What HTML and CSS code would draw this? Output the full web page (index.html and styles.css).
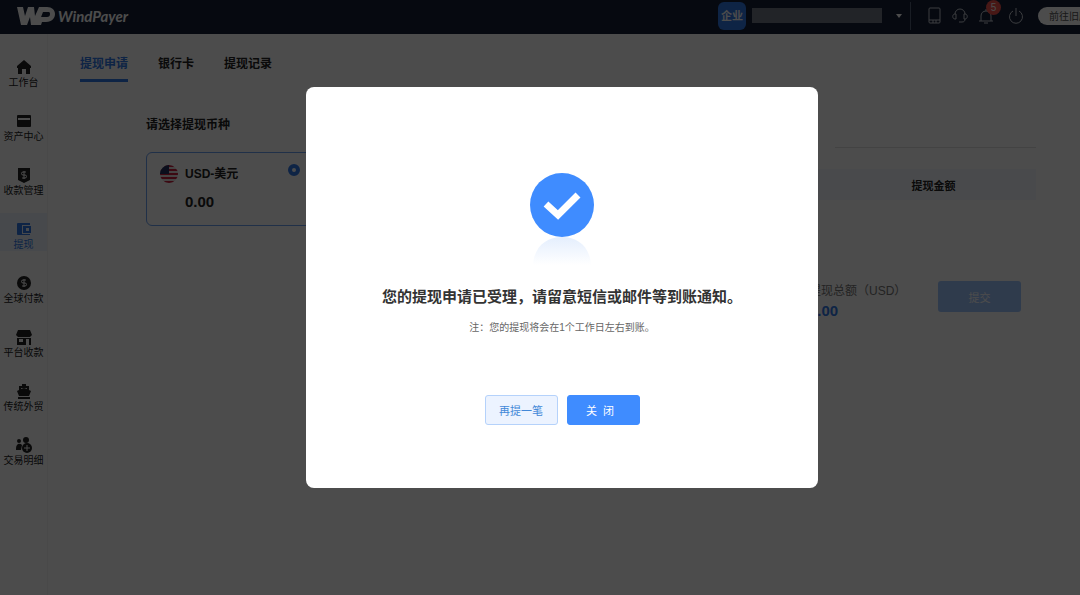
FILE: index.html
```html
<!DOCTYPE html>
<html lang="zh-CN">
<head>
  <meta charset="UTF-8">
  <meta name="viewport" content="width=device-width, initial-scale=1.0">
  <title>WindPayer</title>
  <link rel="stylesheet" href="styles.css">
</head>
<body>
  <div class="page">
    <header class="header">
      <a class="logo" href="#">
        <svg width="38" height="18" viewBox="0 0 38 18" aria-hidden="true">
          <path d="M0 0h6l2 9 3-9h6l1 9 4-9h8c5 0 8 3 8 7s-3 8-9 8h-4l-1 3h-5l3-8h8c2 0 3-1 3-3s-1-2-2-2h-5l-5 13h-7l-1-8-3 8H4z" fill="currentColor"/>
        </svg>
        <span class="logo-text">WindPayer</span>
      </a>
      <div class="account">
        <span class="account-type">企业</span>
        <span class="account-name"></span>
        <button class="account-toggle" aria-label="切换账户"><span class="caret"></span></button>
      </div>
      <nav class="tools">
        <a href="#" aria-label="手机端">
          <svg width="16" height="18" viewBox="0 0 16 18"><rect x="3" y="1" width="11" height="15" rx="1"/><path d="M3 13h11M7 13v3M10 13v3"/></svg>
        </a>
        <a href="#" aria-label="客服">
          <svg width="16" height="18" viewBox="0 0 16 18"><path d="M3 7a5 5 0 0 1 10 0M4 7v5H3C0 12 0 7 3 7zM12 7v5h1c3 0 3-5 0-5zM13 12c0 2-1 3-3 3M7 15h3"/></svg>
        </a>
        <a class="bell" href="#" aria-label="消息">
          <svg width="16" height="18" viewBox="0 0 16 18"><path d="M1 14h14M3 14V9c0-3 2-5 5-5s5 2 5 5v5M8 4V2M6 16h4"/></svg>
          <span class="badge">5</span>
        </a>
        <a href="#" aria-label="退出">
          <svg width="16" height="18" viewBox="0 0 16 18"><path d="M5 4a6.500 6.500 0 1 0 6 0M8 1v8"/></svg>
        </a>
        <button class="old-version">前往旧版</button>
      </nav>
    </header>

    <div class="layout">
      <nav class="sidebar">
        <a class="menu-item" href="#">
          <svg width="16" height="16" viewBox="0 0 16 16"><path d="M8 1 1 7v2h1v6h4v-5h4v5h4V9h1V7z"/></svg>
          工作台
        </a>
        <a class="menu-item" href="#">
          <svg width="16" height="16" viewBox="0 0 16 16"><path fill-rule="evenodd" d="M2 2h12a1 1 0 0 1 1 1v10a1 1 0 0 1-1 1H2a1 1 0 0 1-1-1V3a1 1 0 0 1 1-1zM2 5v2h12V5z"/></svg>
          资产中心
        </a>
        <a class="menu-item" href="#">
          <svg width="16" height="16" viewBox="0 0 16 16"><path d="M2 1h12v12l-6 3-6-3z"/><path class="mark" d="M10 5H7a1.500 1.500 0 0 0 0 3h2a1.500 1.500 0 0 1 0 3H6M8 4v8"/></svg>
          收款管理
        </a>
        <a class="menu-item active" href="#">
          <svg width="16" height="16" viewBox="0 0 16 16"><path d="M2 2h12v2H6v9h8v1H2a1 1 0 0 1-1-1V3a1 1 0 0 1 1-1z"/><path fill-rule="evenodd" d="M7 5h8v7H7zM10 7v3h3V7z"/></svg>
          提现
        </a>
        <a class="menu-item" href="#">
          <svg width="16" height="16" viewBox="0 0 16 16"><circle cx="8" cy="8" r="7"/><path class="mark" d="M10 5H7a1.500 1.500 0 0 0 0 3h2a1.500 1.500 0 0 1 0 3H6M8 4v8"/></svg>
          全球付款
        </a>
        <a class="menu-item" href="#">
          <svg width="16" height="16" viewBox="0 0 16 16"><path d="M2 1h12l2 5-2 2H2L0 6z"/><path fill-rule="evenodd" d="M1 9h14v7H1zM3 10v3h4v-3zM10 10v6h3v-6z"/></svg>
          平台收款
        </a>
        <a class="menu-item" href="#">
          <svg width="16" height="16" viewBox="0 0 16 16"><path fill-rule="evenodd" d="M6 1h4v2h3v4l2 1-2 5H3L1 8l2-1V3h3zM5 5v1l3-1 3 1V5z"/><path d="M2 14h12v2H2z"/></svg>
          传统外贸
        </a>
        <a class="menu-item" href="#">
          <svg width="16" height="16" viewBox="0 0 16 16"><circle cx="3" cy="4" r="2"/><circle cx="10" cy="3" r="3"/><path d="M0 12c0-6 4-6 6-4l-1 5H0z"/><circle cx="11" cy="11" r="5"/><path class="mark" d="M11 8v6M8 11h6"/></svg>
          交易明细
        </a>
      </nav>

      <main class="main">
        <nav class="tabs">
          <a class="tab current" href="#">提现申请</a>
          <a class="tab" href="#">银行卡</a>
          <a class="tab" href="#">提现记录</a>
        </nav>
        <div class="columns">
          <section class="currency">
            <h2 class="section-title">请选择提现币种</h2>
            <label class="currency-card">
              <svg class="flag" width="20" height="20" viewBox="0 0 20 20" aria-hidden="true">
                <defs><clipPath id="round"><circle cx="10" cy="10" r="9"/></clipPath></defs>
                <g clip-path="url(#round)">
                  <path fill="#e8dfe2" d="M0 0h20v20H0z"/>
                  <path stroke="#c8203f" stroke-width="2" d="M0 2h20M0 6h20M0 10h20M0 14h20M0 18h20"/>
                  <path fill="#25305f" d="M0 0h10v10H0z"/>
                </g>
              </svg>
              <span class="currency-info">
                <span class="currency-name">USD-美元</span>
                <span class="currency-amount">0.00</span>
              </span>
              <input class="currency-radio" type="radio" name="currency" checked>
            </label>
          </section>
          <section class="detail">
            <div class="divider"></div>
            <table class="detail-table">
              <thead>
                <tr><th></th><th>提现金额</th></tr>
              </thead>
            </table>
            <div class="summary">
              <div class="total">
                <div class="total-label">提现总额（USD）</div>
                <div class="total-amount">0.00</div>
              </div>
              <button class="submit-button">提交</button>
            </div>
          </section>
        </div>
      </main>
    </div>

    <div class="overlay">
      <div class="dialog" role="dialog" aria-modal="true" aria-labelledby="dialogTitle">
        <svg class="success" width="80" height="100" viewBox="0 0 80 100" aria-hidden="true">
          <defs>
            <linearGradient id="fade" x1="0" y1="0" x2="0" y2="1">
              <stop offset="0" stop-color="#e4eefd"/>
              <stop offset="1" stop-color="#fff"/>
            </linearGradient>
          </defs>
          <path d="M11 96C12 78 24 68 40 68s28 10 29 28z" fill="url(#fade)"/>
          <circle cx="40" cy="36" r="32" fill="#3f8cff"/>
          <path d="M24 35l12 11 20-20" fill="none" stroke="#fff" stroke-width="7"/>
        </svg>
        <h1 class="dialog-title" id="dialogTitle">您的提现申请已受理，请留意短信或邮件等到账通知。</h1>
        <p class="dialog-note">注：您的提现将会在1个工作日左右到账。</p>
        <div class="dialog-actions">
          <button class="btn">再提一笔</button>
          <button class="btn primary">关&nbsp; 闭</button>
        </div>
      </div>
    </div>
  </div>
</body>
</html>
```
FILE: styles.css
```css
* {
  box-sizing: border-box;
}

body {
  margin: 0;
  font-family: "Liberation Sans", "Noto Sans CJK SC", sans-serif;
  font-size: 12px;
  color: #222;
  background-color: #fff;
  overflow: hidden;
}

a {
  color: inherit;
  text-decoration: none;
}

button {
  font-family: inherit;
  cursor: pointer;
}

.page {
  position: relative;
  display: flex;
  flex-direction: column;
  min-width: 1124px;
  min-height: 100vh;
}

/* header */
.header {
  display: flex;
  align-items: center;
  height: 34px;
  padding: 0 24px 3px 17px;
  background-color: #142038;
  color: #fff;
}

.logo {
  display: flex;
  align-items: center;
  gap: 3px;
  margin-right: auto;
}

.logo-text {
  font-family: Lato, sans-serif;
  font-size: 15px;
  font-weight: bold;
  font-style: italic;
}

.account {
  display: flex;
  align-items: center;
  height: 28px;
  border-right: 1px solid #56617a;
}

.account-type {
  width: 28px;
  margin-right: 6px;
  border-radius: 6px;
  background-color: #3078e8;
  font-size: 11px;
  font-weight: bold;
  line-height: 28px;
  text-align: center;
}

.account-name {
  width: 130px;
  height: 15px;
  background-color: #747a86;
}

.account-toggle {
  display: flex;
  padding: 12px 8px 12px 14px;
  border: 0;
  background: none;
}

.caret {
  border: 3px solid transparent;
  border-top: 4px solid #fff;
  border-bottom: 0;
}

.tools {
  display: flex;
  align-items: center;
  gap: 10px;
  padding-left: 15px;
}

.tools a {
  display: flex;
}

.tools svg {
  fill: none;
  stroke: #c8ccd4;
}

.tools .bell {
  position: relative;
  margin-right: 4px;
}

.badge {
  position: absolute;
  top: -7px;
  right: -7px;
  width: 15px;
  border-radius: 8px;
  background-color: #f0504c;
  font-size: 10px;
  line-height: 15px;
  text-align: center;
}

.old-version {
  width: 62px;
  height: 18px;
  margin-left: 4px;
  padding: 0;
  border: 0;
  border-radius: 9px;
  background-color: #fff;
  color: #555;
  font-size: 10px;
}

/* layout */
.layout {
  display: flex;
  flex: 1;
}

.sidebar {
  width: 48px;
  padding-top: 17px;
  border-right: 1px solid #f4f4f4;
}

.menu-item {
  display: flex;
  flex-direction: column;
  align-items: center;
  gap: 1px;
  height: 38px;
  margin-bottom: 16px;
  padding-top: 8px;
  font-size: 10px;
  line-height: 14px;
  white-space: nowrap;
}

.menu-item svg {
  flex: none;
  fill: currentColor;
}

.menu-item .mark {
  fill: none;
  stroke: #fff;
}

.menu-item.active {
  background-color: #edf5ff;
  color: #3078e8;
}

.main {
  flex: 1;
  padding: 21px 88px 0 32px;
}

.tabs {
  display: flex;
  gap: 30px;
}

.tab {
  padding-bottom: 6px;
  border-bottom: 3px solid transparent;
  font-weight: bold;
  line-height: 18px;
}

.tab.current {
  border-color: #3078e8;
  color: #3078e8;
}

.columns {
  display: flex;
  justify-content: space-between;
  padding: 34px 0 0 66px;
}

.currency {
  width: 172px;
}

.section-title {
  margin: 0 0 18px;
  font-size: 12px;
  line-height: 18px;
}

.currency-card {
  display: flex;
  gap: 6px;
  height: 74px;
  padding: 11px 17px 11px 12px;
  border: 1px solid #6ba0f0;
  border-radius: 6px;
}

.currency-info {
  flex: 1;
  font-weight: bold;
  line-height: 20px;
}

.currency-name,
.currency-amount {
  display: block;
}

.currency-amount {
  margin-top: 8px;
  font-size: 15px;
}

.currency-radio {
  appearance: none;
  width: 12px;
  height: 12px;
  margin: 0;
  border: 4px solid #3078e8;
  border-radius: 50%;
  background-color: #fff;
}

.detail {
  width: 235px;
}

.divider {
  margin: 31px 0 21px 34px;
  border-top: 1px solid #e0e0e0;
}

.detail-table {
  width: 100%;
  border-collapse: collapse;
  background-color: #f4f8fd;
  font-size: 11px;
}

.detail-table th {
  width: 205px;
  height: 31px;
  padding: 0;
}

.detail-table th:first-child {
  width: 30px;
}

.summary {
  display: flex;
  justify-content: space-between;
  align-items: flex-start;
  padding: 81px 15px 0 8px;
}

.total-label {
  color: #777;
  line-height: 20px;
  white-space: nowrap;
}

.total-amount {
  color: #3078e8;
  font-size: 15px;
  font-weight: bold;
  line-height: 20px;
}

.submit-button {
  width: 83px;
  height: 31px;
  border: 0;
  border-radius: 3px;
  background-color: #9fc5ff;
  color: #fff;
  font-size: 11px;
}

/* dialog */
.overlay {
  position: absolute;
  inset: 0;
  display: flex;
  align-items: center;
  justify-content: center;
  padding-bottom: 20px;
  background-color: rgba(0, 0, 0, 0.7);
}

.dialog {
  display: flex;
  flex-direction: column;
  align-items: center;
  width: 512px;
  padding: 82px 40px 63px;
  border-radius: 8px;
  background-color: #fff;
}

.dialog-title {
  margin: 17px 0 10px;
  color: #333;
  font-size: 15px;
  line-height: 22px;
}

.dialog-note {
  margin: 0 0 57px;
  color: #666;
  font-size: 10px;
  line-height: 20px;
}

.dialog-actions {
  display: flex;
  gap: 9px;
}

.btn {
  width: 73px;
  height: 30px;
  padding: 0;
  border: 1px solid #b5d2fb;
  border-radius: 3px;
  background-color: #ecf3ff;
  color: #4288d8;
  font-size: 11px;
}

.btn.primary {
  padding-right: 6px;
  border-color: #3f8cff;
  background-color: #3f8cff;
  color: #fff;
}
```
